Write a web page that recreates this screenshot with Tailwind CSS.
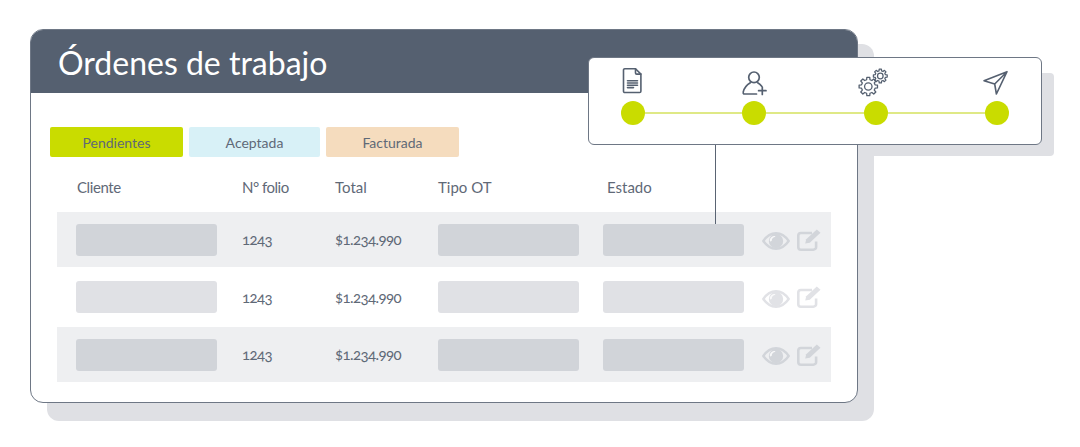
<!DOCTYPE html>
<html lang="es">
<head>
    <meta charset="UTF-8">
    <title>Órdenes de trabajo</title>
    <script src="https://cdn.jsdelivr.net/npm/@tailwindcss/browser@4"></script>
</head>
<body class="bg-white">
    <svg width="0" height="0" class="absolute">
        <defs>
            <polygon id="gear" points="1.56,-9.88 1.81,-7.28 3.86,-6.43 5.88,-8.09 8.09,-5.88 6.43,-3.86 7.28,-1.81 9.88,-1.56 9.88,1.56 7.28,1.81 6.43,3.86 8.09,5.88 5.88,8.09 3.86,6.43 1.81,7.28 1.56,9.88 -1.56,9.88 -1.81,7.28 -3.86,6.43 -5.88,8.09 -8.09,5.88 -6.43,3.86 -7.28,1.81 -9.88,1.56 -9.88,-1.56 -7.28,-1.81 -6.43,-3.86 -8.09,-5.88 -5.88,-8.09 -3.86,-6.43 -1.81,-7.28 -1.56,-9.88"/>
            <g id="eye">
                <path fill="none" stroke="currentColor" stroke-width="2.400" stroke-linejoin="round" d="M1.300 9C4.800 4 9 1.300 14 1.300S23.200 4 26.700 9C23.200 14 19 16.700 14 16.700S4.800 14 1.300 9z"/>
                <circle cx="14" cy="9" r="7.200"/>
                <path fill="#fff" fill-opacity="0.8" d="M7.800 8.800c0-2.800 2.200-4.800 5-4.800.7 0 .7 1-.1 1.100-1.700.3-2.900 1.700-2.900 3.500 0 1-2 1-2 .2z"/>
            </g>
            <g id="edit">
                <path fill="none" stroke="currentColor" stroke-width="2.600" stroke-linejoin="round" d="M15 4.300H4a2.800 2.800 0 0 0-2.700 2.800v12.700A2.800 2.800 0 0 0 4 22.600h12.300a2.800 2.800 0 0 0 2.800-2.800v-6.300"/>
                <path d="M19.800 0.600l3.700 3.500-10.700 10.800-4.600 1 1-4.700z"/>
            </g>
        </defs>
    </svg>

    <div class="relative w-[1080px] h-[447px] overflow-hidden pt-[29px] pl-[30px] text-[#5f6977] font-['Lato',sans-serif]">
        <!-- offset shadows behind the cards -->
        <div class="absolute left-[47px] top-[44px] w-[827px] h-[377px] rounded-[12px] bg-[#dfe0e4]"></div>
        <div class="absolute left-[860px] top-[73px] w-[194px] h-[83px] rounded-[4px] bg-[#dfe0e4]"></div>

        <!-- Orders card -->
        <div class="relative w-[828px] h-[374px] rounded-[13px] border border-[#6e7785] bg-white overflow-hidden">
            <div class="h-[64px] -mt-px -mx-px bg-[#556070] pl-[28px] pt-[4px] flex items-center">
                <h1 class="text-[32px] leading-none text-white">Órdenes de trabajo</h1>
            </div>

            <div class="flex gap-[6px] pl-[19px] pt-[34px]">
                <div class="w-[133px] h-[30px] rounded-[2px] bg-[#c9dc00] flex items-center justify-center text-[14px]">Pendientes</div>
                <div class="w-[131px] h-[30px] rounded-[2px] bg-[#d8f1f7] flex items-center justify-center text-[14px]">Aceptada</div>
                <div class="w-[133px] h-[30px] rounded-[2px] bg-[#f5dcbe] flex items-center justify-center text-[14px]">Facturada</div>
            </div>

            <!-- table -->
            <div class="ml-[26px] w-[774px] mt-[19px]">
                <div class="h-[36px] pb-[14px] pl-[19px] grid grid-cols-[166px_93px_103px_165px_1fr] items-center text-[15px]">
                    <span class="pl-px tracking-[-0.4px]">Cliente</span>
                    <span class="tracking-[-0.5px]">N° folio</span>
                    <span>Total</span>
                    <span>Tipo OT</span>
                    <span class="pl-[4px]">Estado</span>
                </div>

                <div class="h-[55px] bg-[#eeeff1] pl-[19px] grid grid-cols-[166px_93px_103px_165px_159px_1fr] items-center text-[15px] tracking-[-0.6px]">
                    <div class="w-[141px] h-[32px] rounded-[3px] bg-[#d1d4d9]"></div>
                    <span class="oldstyle-nums">1243</span>
                    <span class="oldstyle-nums">$1.234.990</span>
                    <div class="w-[141px] h-[32px] rounded-[3px] bg-[#d1d4d9]"></div>
                    <div class="w-[141px] h-[32px] rounded-[3px] bg-[#d1d4d9]"></div>
                    <div class="flex items-center gap-[7px] text-[#d2d5da]">
                        <svg width="28" height="18" viewBox="0 0 28 18" fill="currentColor" class="mt-[3px]"><use href="#eye"/></svg>
                        <svg width="24" height="22" viewBox="0 0 24 24" preserveAspectRatio="none" fill="currentColor"><use href="#edit"/></svg>
                    </div>
                </div>

                <div class="h-[60px] pl-[19px] grid grid-cols-[166px_93px_103px_165px_159px_1fr] items-center text-[15px] tracking-[-0.6px]">
                    <div class="w-[141px] h-[32px] rounded-[3px] bg-[#e0e1e5]"></div>
                    <span class="oldstyle-nums">1243</span>
                    <span class="oldstyle-nums">$1.234.990</span>
                    <div class="w-[141px] h-[32px] rounded-[3px] bg-[#e0e1e5]"></div>
                    <div class="w-[141px] h-[32px] rounded-[3px] bg-[#e0e1e5]"></div>
                    <div class="flex items-center gap-[7px] text-[#e1e2e6]">
                        <svg width="28" height="18" viewBox="0 0 28 18" fill="currentColor" class="mt-[3px]"><use href="#eye"/></svg>
                        <svg width="24" height="22" viewBox="0 0 24 24" preserveAspectRatio="none" fill="currentColor"><use href="#edit"/></svg>
                    </div>
                </div>

                <div class="h-[55px] bg-[#eeeff1] pl-[19px] grid grid-cols-[166px_93px_103px_165px_159px_1fr] items-center text-[15px] tracking-[-0.6px]">
                    <div class="w-[141px] h-[32px] rounded-[3px] bg-[#d1d4d9]"></div>
                    <span class="oldstyle-nums">1243</span>
                    <span class="oldstyle-nums">$1.234.990</span>
                    <div class="w-[141px] h-[32px] rounded-[3px] bg-[#d1d4d9]"></div>
                    <div class="w-[141px] h-[32px] rounded-[3px] bg-[#d1d4d9]"></div>
                    <div class="flex items-center gap-[7px] text-[#d2d5da]">
                        <svg width="28" height="18" viewBox="0 0 28 18" fill="currentColor" class="mt-[3px]"><use href="#eye"/></svg>
                        <svg width="24" height="22" viewBox="0 0 24 24" preserveAspectRatio="none" fill="currentColor"><use href="#edit"/></svg>
                    </div>
                </div>
            </div>
        </div>

        <!-- connector from the stepper to the row -->
        <div class="absolute left-[715px] top-[144px] w-px h-[80px] bg-[#5a6473]"></div>

        <!-- Stepper popup -->
        <div class="absolute left-[588px] top-[57px] w-[454px] h-[88px] rounded-[6px] border border-[#6e7785] bg-white px-[32px] pt-[9px]">
            <div class="flex justify-between h-[30px] text-[#556070]">
                <div class="w-6 flex justify-center">
                    <svg width="30" height="30" viewBox="0 0 30 30" class="shrink-0" fill="none" stroke="currentColor" stroke-width="1.600" stroke-linejoin="round" stroke-linecap="round">
                        <path d="M6.800 1.700h10.700l5.400 5.400v17.100a1.300 1.300 0 0 1-1.300 1.300H6.800a1.300 1.300 0 0 1-1.300-1.300V3a1.300 1.300 0 0 1 1.300-1.300z"/>
                        <path d="M17.500 1.700v4.200a1.200 1.200 0 0 0 1.200 1.200h4.200"/>
                        <path d="M9.500 13.700h10M9.500 16h10M9.500 18.300h10M9.500 20.600h6"/>
                    </svg>
                </div>
                <div class="w-6 flex justify-center">
                    <svg width="30" height="30" viewBox="0 0 30 30" class="shrink-0" fill="none" stroke="currentColor" stroke-width="1.700" stroke-linecap="round" stroke-linejoin="round">
                        <circle cx="15" cy="10.300" r="5.300"/>
                        <path d="M17.500 27H5.500a1.400 1.400 0 0 1-1.300-1.800C5 21 7.700 18 11.300 15.800"/>
                        <path d="M18.700 15.800c1.700 1 3 2.100 4 3.400"/>
                        <path d="M23.300 20v7.400M19.600 23.700H27"/>
                    </svg>
                </div>
                <div class="w-6 flex justify-center">
                    <svg width="30" height="30" viewBox="0 0 30 30" class="shrink-0 overflow-visible" fill="none" stroke="currentColor" stroke-linejoin="round">
                        <g transform="translate(7.300 19.500) scale(0.930)" stroke-width="1.400">
                            <use href="#gear"/>
                            <circle r="4"/>
                        </g>
                        <g transform="translate(19.300 9) scale(0.700)" stroke-width="1.800">
                            <use href="#gear"/>
                            <circle r="4"/>
                        </g>
                    </svg>
                </div>
                <div class="w-6 flex justify-center">
                    <svg width="30" height="30" viewBox="0 0 30 30" class="shrink-0" fill="none" stroke="currentColor" stroke-width="1.600" stroke-linejoin="round" stroke-linecap="round">
                        <path d="M25 4.700 2 13.700l10.700 3.300L14.400 27zM25 4.700 12.700 17"/>
                    </svg>
                </div>
            </div>
            <div class="flex items-center mt-[4px]">
                <div class="w-6 h-6 shrink-0 rounded-full bg-[#c9dc00]"></div>
                <div class="flex-1 h-[2px] bg-[#dfe986]"></div>
                <div class="w-6 h-6 shrink-0 rounded-full bg-[#c9dc00]"></div>
                <div class="flex-1 h-[2px] bg-[#dfe986]"></div>
                <div class="w-6 h-6 shrink-0 rounded-full bg-[#c9dc00]"></div>
                <div class="flex-1 h-[2px] bg-[#dfe986]"></div>
                <div class="w-6 h-6 shrink-0 rounded-full bg-[#c9dc00]"></div>
            </div>
        </div>
    </div>
</body>
</html>
